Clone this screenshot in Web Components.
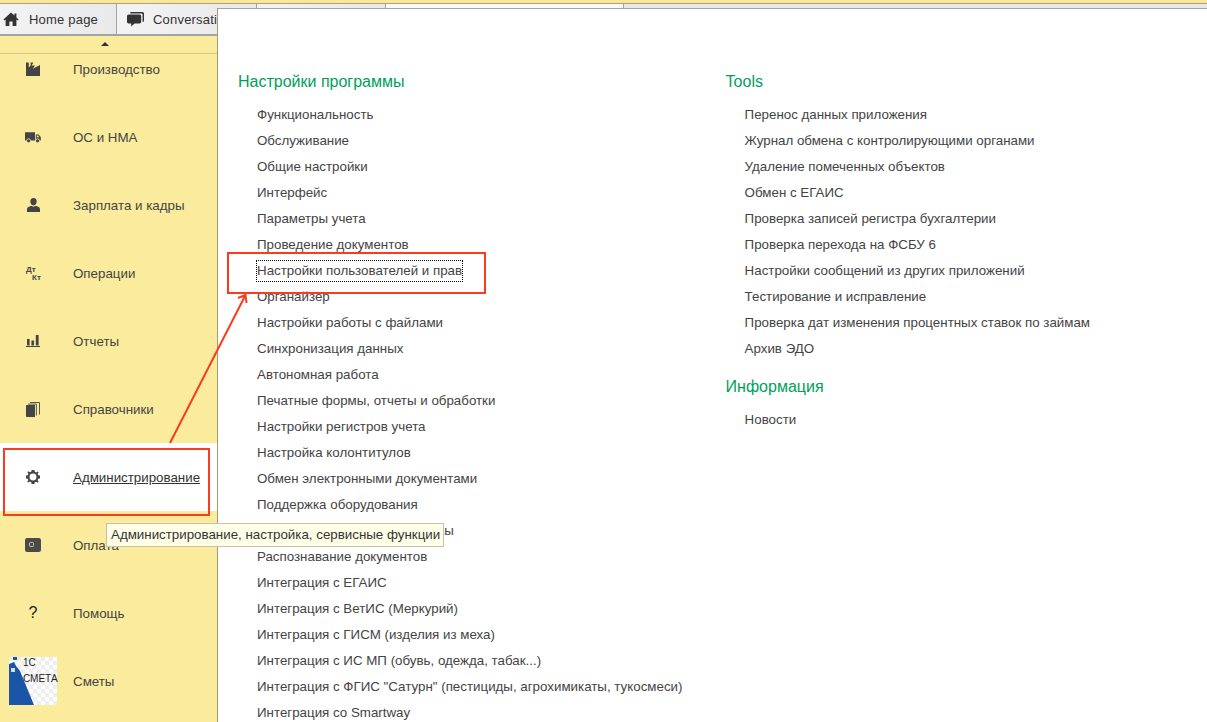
<!DOCTYPE html>
<html lang="ru"><head><meta charset="utf-8"><title>1C</title>
<style>html,body{margin:0;height:100%;overflow:hidden;background:#fbec9d;font:13.33px "Liberation Sans",Arial,sans-serif;color:#444}</style>
</head><body>
<app-shell>
  <tab-bar slot="tabs">
    <tab-item w="116" icon="home">Home page</tab-item>
    <tab-item w="139" icon="chat">Conversations</tab-item>
    <tab-item w="128"></tab-item>
    <tab-item w="237" active></tab-item>
  </tab-bar>
  <side-bar slot="side">
    <nav-item icon="factory">Производство</nav-item>
    <nav-item icon="truck">ОС и НМА</nav-item>
    <nav-item icon="person">Зарплата и кадры</nav-item>
    <nav-item icon="dtkt">Операции</nav-item>
    <nav-item icon="bars">Отчеты</nav-item>
    <nav-item icon="books">Справочники</nav-item>
    <nav-item icon="gear" active>Администрирование</nav-item>
    <nav-item icon="wallet">Оплата</nav-item>
    <nav-item icon="help">Помощь</nav-item>
    <nav-item icon="smeta">Сметы</nav-item>
  </side-bar>
  <menu-panel slot="panel">
    <menu-col slot="a">
      <menu-sec title="Настройки программы">
        <menu-link>Функциональность</menu-link><menu-link>Обслуживание</menu-link><menu-link>Общие настройки</menu-link><menu-link>Интерфейс</menu-link><menu-link>Параметры учета</menu-link><menu-link>Проведение документов</menu-link><menu-link focus>Настройки пользователей и прав</menu-link><menu-link>Органайзер</menu-link><menu-link>Настройки работы с файлами</menu-link><menu-link>Синхронизация данных</menu-link><menu-link>Автономная работа</menu-link><menu-link>Печатные формы, отчеты и обработки</menu-link><menu-link>Настройки регистров учета</menu-link><menu-link>Настройка колонтитулов</menu-link><menu-link>Обмен электронными документами</menu-link><menu-link>Поддержка оборудования</menu-link><menu-link>Интернет-поддержка и сервисы</menu-link><menu-link>Распознавание документов</menu-link><menu-link>Интеграция с ЕГАИС</menu-link><menu-link>Интеграция с ВетИС (Меркурий)</menu-link><menu-link>Интеграция с ГИСМ (изделия из меха)</menu-link><menu-link>Интеграция с ИС МП (обувь, одежда, табак...)</menu-link><menu-link>Интеграция с ФГИС "Сатурн" (пестициды, агрохимикаты, тукосмеси)</menu-link><menu-link>Интеграция со Smartway</menu-link>
      </menu-sec>
    </menu-col>
    <menu-col slot="b">
      <menu-sec title="Tools">
        <menu-link>Перенос данных приложения</menu-link><menu-link>Журнал обмена с контролирующими органами</menu-link><menu-link>Удаление помеченных объектов</menu-link><menu-link>Обмен с ЕГАИС</menu-link><menu-link>Проверка записей регистра бухгалтерии</menu-link><menu-link>Проверка перехода на ФСБУ 6</menu-link><menu-link>Настройки сообщений из других приложений</menu-link><menu-link>Тестирование и исправление</menu-link><menu-link>Проверка дат изменения процентных ставок по займам</menu-link><menu-link>Архив ЭДО</menu-link>
      </menu-sec>
      <menu-sec title="Информация"><menu-link>Новости</menu-link></menu-sec>
    </menu-col>
  </menu-panel>
  <tool-tip slot="over">Администрирование, настройка, сервисные функции</tool-tip>
  <red-notes slot="over"></red-notes>
</app-shell>
<script>
const ICONS={
home:'<svg width="16" height="16" viewBox="0 0 16 16"><path fill="#333" d="M8 1.500 0.400 8.600 1.400 9.600 2.600 8.600V15H6.400V10.400H9.600V15H13.400V8.600L14.600 9.600 15.600 8.600 13.400 6.500V2.400H11.400V4.600Z"/></svg>',
chat:'<svg width="17" height="15" viewBox="0 0 17 15"><path fill="#333" d="M4 0H15.400Q17 0 17 1.600V8.400Q17 10 15.600 10V2.600Q15.600 1.400 14.200 1.400H3.200Q3 0 4 0Z"/><path fill="#333" d="M1.600 2.400H12.600Q14.200 2.400 14.200 4V9.800Q14.200 11.400 12.600 11.400H7.600L4.200 14.600V11.400H1.600Q0 11.400 0 9.800V4Q0 2.400 1.600 2.400Z"/></svg>',
factory:'<svg width="14" height="14" viewBox="0 0 14 14"><path fill="#444" d="M0 .5H2.800V5.400L4.600 3.600V.5H7.400L5.600 3.400 9 3.400 6.800 6.800 14 3V14H0Z"/></svg>',
truck:'<svg width="16" height="11" viewBox="0 0 16 11"><path fill="#444" d="M0 .8Q0 .2 .6 .2H10V8.400H0ZM10.800 2.400H13.600L15.800 5V8.400H10.800ZM11.800 3.400V5.200H14.200L13 3.400Z"/><circle cx="3.600" cy="8.800" r="2" fill="#444" stroke="#fbec9d" stroke-width=".8"/><circle cx="12.600" cy="8.800" r="2" fill="#444" stroke="#fbec9d" stroke-width=".8"/></svg>',
person:'<svg width="13" height="14" viewBox="0 0 14 15"><path fill="#444" d="M7 0C9.400 0 10.400 1.600 10.400 3.800 10.400 6 9.200 8 7 8 4.800 8 3.600 6 3.600 3.800 3.600 1.600 4.600 0 7 0ZM4.600 8.200 7 9.400 9.400 8.200 12.600 9.600Q14 10.200 14 12V15H0V12Q0 10.200 1.400 9.600Z"/></svg>',
bars:'<svg width="14" height="12" viewBox="0 0 14 12"><path fill="#444" d="M1 4H3.600V10.600H1ZM5.400 5.500H8V10.600H5.400ZM9.800 0H12.600V10.600H9.800ZM0 11H14V12H0Z"/></svg>',
books:'<svg width="14" height="15" viewBox="0 0 14 15"><path fill="#444" d="M.8 3H9V15H.8Q0 15 0 14.200V3.800Q0 3 .8 3Z"/><path fill="none" stroke="#444" stroke-width=".9" d="M2 2.100H10.400V13.500M4 .5H13.500V12.500"/></svg>',
gear:'<svg width="14" height="14" viewBox="0 0 15 15"><path fill="#444" fill-rule="evenodd" d="M6 0H9L9.400 1.900 10.900 2.600 12.600 1.500 13.600 2.500 12.500 4.200 13.200 5.600 15 6V9L13.100 9.400 12.400 10.900 13.500 12.600 12.500 13.600 10.800 12.500 9.400 13.200 9 15H6L5.600 13.100 4.100 12.400 2.400 13.500 1.400 12.500 2.500 10.800 1.800 9.400 0 9V6L1.900 5.600 2.600 4.100 1.500 2.400 2.500 1.400 4.200 2.500 5.600 1.800ZM7.500 3.800A3.700 3.700 0 1 0 7.500 11.200 3.700 3.700 0 1 0 7.500 3.800Z"/></svg>',
wallet:'<svg width="16" height="14" viewBox="0 0 16 14"><rect width="16" height="14" rx="2.200" fill="#4a4a4a"/><rect x="4.500" y="4.500" width="4" height="4" rx=".8" fill="none" stroke="#cfc79a"/></svg>',
};
const css=s=>`<style>${s}</style>`;
const define=(n,render)=>customElements.define(n,class extends HTMLElement{constructor(){super();this.attachShadow({mode:'open'})}connectedCallback(){this.shadowRoot.innerHTML=render(this)}});
define('app-shell',()=>css(`:host{display:grid;grid-template:4px 32px 1fr/217px 1fr;height:722px;position:relative;overflow:hidden;background:#fbec9d}
.strip{grid-column:1/3;background:#f9e79a;border-bottom:1px solid #a8a283;box-sizing:border-box}
.tabs{grid-column:1/3}.side{min-height:0}
.main{position:absolute;left:217px;top:8px;right:0;bottom:0}`)+`<div class="strip"></div><div class="tabs"><slot name="tabs"></slot></div><div class="side"><slot name="side"></slot></div><div></div><div class="main"><slot name="panel"></slot></div><slot name="over"></slot>`);
define('tab-bar',()=>css(`:host{display:flex;height:32px;box-sizing:border-box;border-bottom:2px solid #a3a3a3;background:#e8e8e8}`)+`<slot></slot>`);
define('tab-item',e=>{const w=+e.getAttribute('w');const a=e.hasAttribute('active');const ic=e.getAttribute('icon');return css(`:host{display:flex;align-items:center;flex:none;width:${w}px;border-right:1px solid #a3a3a3;overflow:hidden;white-space:nowrap;background:${a?'#fafafa':'linear-gradient(90deg,#f3f3f3,#e9e9e9)'};color:#333;font-size:13px;letter-spacing:.2px}
.i{width:${ic=='home'?29:36}px;flex:none;padding-left:${ic=='home'?'3px':'10px'};box-sizing:border-box;display:flex}.i:empty{display:none}svg{display:block}`)+`<span class="i">${ic?ICONS[ic]:''}</span><slot></slot>`});
define('side-bar',()=>css(`:host{display:block;height:686px;overflow:hidden;position:relative}
.up{position:relative;z-index:1;height:18px;box-sizing:border-box;background:#fbec9d;border-bottom:1px solid #d4c67f;display:flex;justify-content:center}
.up i{display:block;width:0;height:0;border:4px solid transparent;border-top:0;border-bottom:4px solid #333;margin-top:6px;margin-right:7px}
.list{margin-top:-19px}`)+`<div class="up"><i></i></div><div class="list"><slot></slot></div>`);
define('nav-item',e=>{const k=e.getAttribute('icon');const act=e.hasAttribute('active');
let ic=ICONS[k]||'';
if(k=='dtkt')ic=`<span class="dk"><b>Дт</b><b>Кт</b></span>`;
if(k=='help')ic=`<span class="q">?</span>`;
if(k=='smeta')ic=`<span class="sm"><svg width="48" height="48" viewBox="0 0 48 48"><defs><pattern id="c" width="8" height="8" patternUnits="userSpaceOnUse"><rect width="8" height="8" fill="#fff"/><rect width="4" height="4" fill="#eee"/><rect x="4" y="4" width="4" height="4" fill="#eee"/></pattern></defs><rect width="48" height="48" fill="url(#c)"/><path fill="#1b55a8" d="M0 7 5 5 7 9 11 14 25 48H0Z"/><rect x="2" y="11" width="4" height="4" fill="#cfe0f5"/><rect x="4" y="0" width="4" height="3" fill="#1b55a8"/></svg><em class="t1">1С</em><em class="t2">СМЕТА</em></span>`;
return css(`:host{display:flex;align-items:center;height:68px;background:${act?'#fff':'transparent'};color:#444;font-size:13.33px;box-sizing:border-box}
.i{width:66px;flex:none;display:flex;justify-content:center;align-items:center;position:relative}
.t{margin-left:7px;${act?'text-decoration:underline;color:#333':''}}
svg{display:block}
.dk{display:block;width:14px;height:16px;position:relative;font:bold 8px "Liberation Sans",sans-serif;color:#444}
.dk b{position:absolute;left:0;top:0}.dk b+b{left:6px;top:8px}
.q{font:16px "Liberation Sans",sans-serif;color:#222}
.sm{display:block;position:relative;width:48px;height:48px}
.sm em{position:absolute;font:normal 10px "Liberation Sans",sans-serif;color:#222;white-space:nowrap}
.t1{left:14px;top:0}.t2{left:14px;top:16px}`)+`<span class="i">${ic}</span><span class="t"><slot></slot></span>`});
define('menu-panel',()=>css(`:host{display:grid;grid-template-columns:487.6px 1fr;height:714px;box-sizing:border-box;background:#fff;border-left:1px solid #a39c73;border-top:1px solid #a3a3a3;padding:62px 0 0 20px;overflow:hidden}`)+`<slot name="a"></slot><slot name="b"></slot>`);
define('menu-col',()=>css(`:host{display:flex;flex-direction:column;gap:14px}`)+`<slot></slot>`);
define('menu-sec',e=>css(`:host{display:block}h2{margin:0 0 9px;font:16px/22px "Liberation Sans",sans-serif;color:#00a05a}.l{display:block}`)+`<h2>${e.getAttribute('title')}</h2><div class="l"><slot></slot></div>`);
define('menu-link',e=>css(`:host{display:block;height:26px;padding-left:19px;line-height:26px;white-space:nowrap;color:#444;font-size:13.33px}
span{display:inline-block;position:relative}
${e.hasAttribute('focus')?'span::after{content:"";position:absolute;left:-1px;right:-1px;top:2px;bottom:2px;border:1px dotted #000}':''}`)+`<span><slot></slot></span>`);
define('tool-tip',()=>css(`:host{position:absolute;left:106px;top:523px;height:24px;width:338px;box-sizing:border-box;background:#ffffe8;border:1px solid #c4c2aa;padding-left:4px;line-height:22px;white-space:nowrap;color:#333;font-size:13.33px}`)+`<slot></slot>`);
define('red-notes',()=>css(`:host{position:absolute;inset:0;pointer-events:none}svg{position:absolute;left:0;top:0}`)+`<svg width="1207" height="722" fill="none" stroke="#f93c1e" stroke-width="2"><rect x="4" y="449" width="205" height="66"/><rect x="228" y="253" width="257" height="40"/><path d="M170 443 245.500 295M238 298 245.500 295 246.500 303"/></svg>`);
</script>
</body></html>
